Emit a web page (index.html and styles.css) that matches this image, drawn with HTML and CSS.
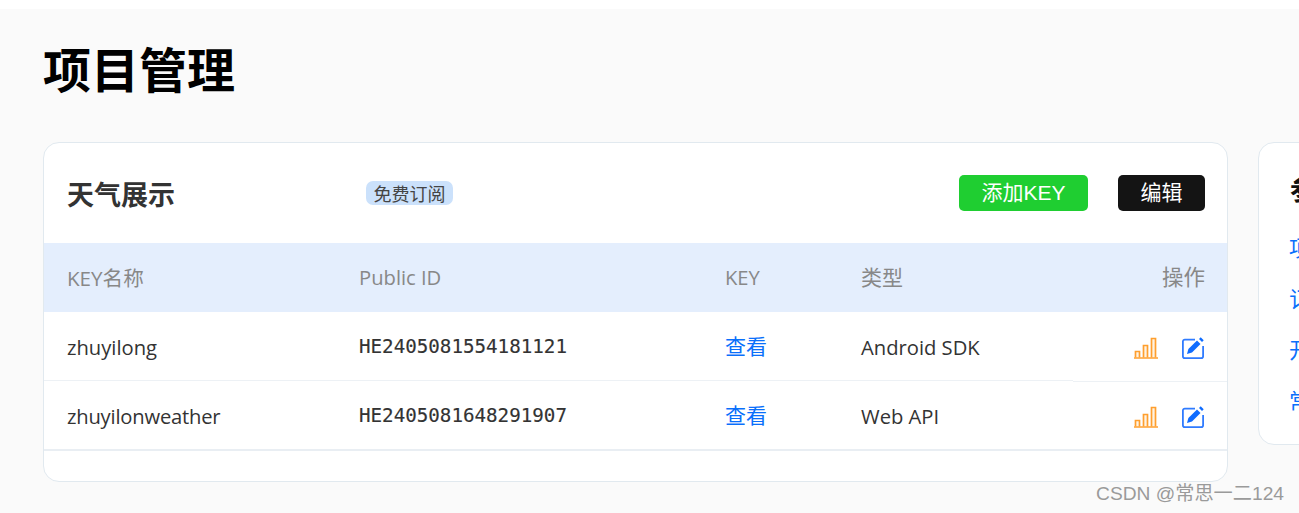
FILE: index.html
```html
<!DOCTYPE html>
<html lang="zh-CN">
<head>
<meta charset="utf-8">
<title>项目管理</title>
<link rel="stylesheet" href="styles.css">
</head>
<body>
<svg class="defs" width="0" height="0" aria-hidden="true">
  <symbol id="bars" viewBox="0 0 24 22">
    <path d="M1.500 20.500v-6h4v6M9.500 20.500v-12h4v12M17.500 20.500v-19h4v19" fill="#fff3e2" stroke="#ff9f2e" stroke-width="1.700"/>
    <path d="M0 21h24" stroke="#ff9f2e" stroke-width="1.700"/>
  </symbol>
  <symbol id="edit" viewBox="0 0 22 22">
    <path d="M13 2.600H2.800A1.900 1.900 0 0 0 .9 4.500v14.700A1.900 1.900 0 0 0 2.800 21.100h16.400a1.900 1.900 0 0 0 1.900-1.900V9" fill="none" stroke="#2f7bff" stroke-width="1.800"/>
    <path d="M5 17l1.400-5L15 3.500l3.500 3.500L10 15.500z" fill="#0f6cff"/>
    <path d="M17 2l1.700-1.700 3 3L20 5z" fill="#0f6cff"/>
  </symbol>
</svg>
<main class="page">
  <h1 class="title">项目管理</h1>
  <div class="cards">
    <section class="card main-card">
      <header class="card-head">
        <h2 class="card-title">天气展示</h2>
        <span class="badge">免费订阅</span>
        <div class="actions">
          <button class="btn btn-green">添加KEY</button>
          <button class="btn btn-black">编辑</button>
        </div>
      </header>
      <div class="table">
        <div class="row row-head">
          <div class="cell cell-name">KEY名称</div>
          <div class="cell">Public ID</div>
          <div class="cell">KEY</div>
          <div class="cell cell-cjk">类型</div>
          <div class="cell cell-ops">操作</div>
        </div>
        <div class="row row-body">
          <div class="cell cell-line">zhuyilong</div>
          <div class="cell cell-line mono">HE2405081554181121</div>
          <div class="cell cell-line link">查看</div>
          <div class="cell cell-line">Android SDK</div>
          <div class="cell cell-ops cell-line-low">
            <svg class="icon-bars"><use href="#bars"/></svg>
            <svg class="icon-edit"><use href="#edit"/></svg>
          </div>
        </div>
        <div class="row row-body row-last">
          <div class="cell cell-line narrow">zhuyilonweather</div>
          <div class="cell cell-line mono">HE2405081648291907</div>
          <div class="cell cell-line link">查看</div>
          <div class="cell cell-line">Web API</div>
          <div class="cell cell-ops cell-line">
            <svg class="icon-bars"><use href="#bars"/></svg>
            <svg class="icon-edit"><use href="#edit"/></svg>
          </div>
        </div>
      </div>
    </section>
    <aside class="card side-card">
      <h3 class="side-title">参考资料</h3>
      <a class="side-link">项目管理</a>
      <a class="side-link">订阅管理</a>
      <a class="side-link">开发文档</a>
      <a class="side-link">常见问题</a>
    </aside>
  </div>
</main>
<div class="watermark">CSDN @常思一二124</div>
</body>
</html>
```

FILE: styles.css
```css
* { box-sizing: border-box; }
html, body { margin: 0; height: 513px; overflow: hidden; background: #fff; }
body {
  font-family: "Open Sans", "Noto Sans CJK SC", sans-serif;
  color: #333;
  position: relative;
}
.defs { display: block; height: 0; }
.page {
  margin-top: 9px;
  height: 504px;
  background: #fafafa;
  padding: 22px 0 0 43px;
  overflow: hidden;
}
.title {
  margin: 0 0 39px;
  font-size: 48px;
  line-height: 72px;
  font-weight: 700;
  color: #000;
  font-family: "Noto Sans CJK SC", sans-serif;
}
.cards { display: flex; gap: 30px; align-items: flex-start; width: 1600px; }
.card {
  background: #fff;
  border: 1px solid #e1e9ef;
  border-radius: 16px;
  overflow: hidden;
}
.main-card { width: 1185px; height: 340px; flex: none; }
.side-card { width: 300px; height: 303px; flex: none; padding: 28px 30px; }
.card-head {
  height: 100px;
  display: flex;
  align-items: center;
  padding: 0 22px 0 23px;
}
.card-title {
  margin: 0;
  width: 299px;
  padding-top: 2px;
  font: 700 27px/36px "Noto Sans CJK SC", sans-serif;
  color: #333;
}
.badge {
  width: 87px;
  height: 24px;
  border-radius: 7px;
  background: #cbe1fb;
  text-align: center;
  font: 400 18px/24px "Noto Sans CJK SC", sans-serif;
  color: #444;
}
.actions { margin-left: auto; display: flex; gap: 30px; }
.btn {
  height: 36px;
  border: 0;
  padding: 0;
  border-radius: 5px;
  color: #fff;
  font: 400 21px/36px "Liberation Sans", "Noto Sans CJK SC", sans-serif;
}
.btn-green { width: 129px; background: #1fce31; }
.btn-black { width: 87px; background: #141414; }
.row {
  display: grid;
  grid-template-columns: 292px 366px 136px 1fr 154px;
  align-items: start;
}
.cell {
  padding-left: 23px;
  font-size: 20.200px;
  white-space: nowrap;
  display: flex;
  align-items: center;
}
.row-head {
  height: 69px;
  background: #e4eefd;
}
.row-head .cell {
  height: 69px;
  color: #888;
  font-size: 20.200px;
  padding-bottom: 2px;
}
.row-head .cell-name { font-size: 20.600px; }
.row-body { height: 69px; }
.row-body .cell { height: 69px; padding-top: 2px; }
.row-head .cell-ops {
  padding: 0 22px 4px 0;
  justify-content: flex-end;
  font-size: 21.500px;
  font-family: "Noto Sans CJK SC", sans-serif;
}
.row-body .cell-ops {
  padding: 3px 23px 0 0;
  justify-content: flex-end;
}
.row-head .cell-cjk {
  font-family: "Noto Sans CJK SC", sans-serif;
  font-size: 21px;
  padding-bottom: 4px;
}
.cell-line { border-bottom: 1px solid #edf1f5; }
.row-body .cell-line-low { height: 70px; border-bottom: 1px solid #edf1f5; margin-bottom: -1px; }
.row-last .cell-line { height: 70px; border-bottom: 2px solid #e9eef3; }
.row-body .link { font-family: "Noto Sans CJK SC", sans-serif; font-size: 21px; color: #0a6ffb; padding-top: 0; padding-bottom: 2px; }
.row-body .mono { font-family: "DejaVu Sans Mono", monospace; font-size: 19.200px; -webkit-text-stroke: 0.150px #333; padding-top: 0; }
.narrow { letter-spacing: -0.200px; }
.icon-bars { width: 24px; height: 22px; margin-right: 24px; }
.icon-edit { width: 22px; height: 22px; }
.side-title { margin: 0 0 24px; padding-left: 1px; font: 700 27px/36px "Noto Sans CJK SC", sans-serif; color: #111; }
.side-link { display: block; margin-bottom: 20px; font: 400 22px/31px "Noto Sans CJK SC", sans-serif; color: #0a6ffb; }
.watermark {
  position: absolute;
  right: 15px;
  bottom: 7px;
  font: 400 19.200px/24px "Liberation Sans", "Noto Sans CJK SC", sans-serif;
  color: #9a9a9a;
}
```
